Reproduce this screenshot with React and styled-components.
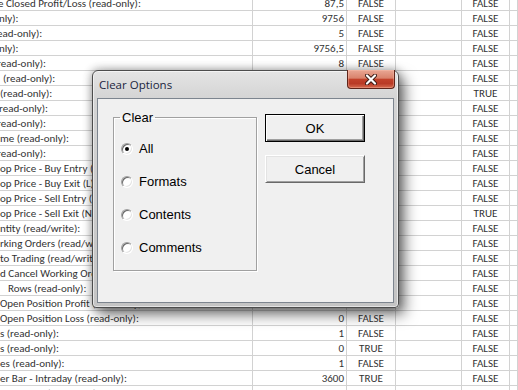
import React from 'react';
import styled, { createGlobalStyle } from 'styled-components';

const GlobalStyle = createGlobalStyle`
  html, body { margin: 0; padding: 0; background: #fff; overflow: hidden; }
`;

const rows = [
  { a: 'e Closed Profit/Loss (read-only):', ind: -2, b: '87,5', c: 'FALSE', e: 'FALSE' },
  { a: 'nly):', ind: -1, b: '9756', c: 'FALSE', e: 'FALSE' },
  { a: 'ead-only):', ind: -3, b: '5', c: 'FALSE', e: 'FALSE' },
  { a: 'nly):', ind: -1, b: '9756,5', c: 'FALSE', e: 'FALSE' },
  { a: 'read-only):', ind: -3, b: '8', c: 'FALSE', e: 'FALSE' },
  { a: '(read-only):', ind: 3, e: 'FALSE' },
  { a: '(read-only):', ind: 0, e: 'TRUE' },
  { a: 'read-only):', ind: -1, e: 'FALSE' },
  { a: 'read-only):', ind: -3, e: 'FALSE' },
  { a: 'me (read-only):', ind: 0, e: 'FALSE' },
  { a: 'read-only):', ind: -3, e: 'FALSE' },
  { a: 'op Price - Buy Entry (B) (read/write):', ind: 0, e: 'FALSE' },
  { a: 'op Price - Buy Exit (L) (read/write):', ind: 0, e: 'FALSE' },
  { a: 'op Price - Sell Entry (S) (read/write):', ind: 0, e: 'FALSE' },
  { a: 'op Price - Sell Exit (N) (read/write):', ind: 0, e: 'TRUE' },
  { a: 'ntity (read/write):', ind: 0, e: 'FALSE' },
  { a: 'rking Orders (read/write):', ind: 0, e: 'FALSE' },
  { a: 'to Trading (read/write):', ind: 0, e: 'FALSE' },
  { a: 'd Cancel Working Orders (read/write):', ind: 0, e: 'FALSE' },
  { a: 'Rows (read-only):', ind: 8, e: 'FALSE' },
  { a: 'Open Position Profit (read-only):', ind: 0, e: 'FALSE' },
  { a: 'Open Position Loss (read-only):', ind: 0, b: '0', c: 'FALSE', e: 'FALSE' },
  { a: 's (read-only):', ind: 0, b: '1', c: 'FALSE', e: 'FALSE' },
  { a: 's (read-only):', ind: 0, b: '0', c: 'TRUE', e: 'FALSE' },
  { a: 'es (read-only):', ind: 0, b: '1', c: 'FALSE', e: 'FALSE' },
  { a: 'er Bar - Intraday (read-only):', ind: 0, b: '3600', c: 'TRUE', e: 'FALSE' },
  { a: 'es Per Bar (read-only):', ind: 0, b: '5', c: 'FALSE', e: 'FALSE' },
];

const options = ['All', 'Formats', 'Contents', 'Comments'];

const Page = styled.div`
  position: relative;
  width: 518px;
  height: 390px;
  overflow: hidden;
  background: #fff;
`;

const Sheet = styled.div`
  margin-top: -4px;
  display: flex;
  flex-direction: column;
  font-family: Carlito, Calibri, Lato, sans-serif;
  font-size: 11px;
  color: #333;
`;

const Row = styled.div`
  display: grid;
  grid-template-columns: 253px 94px 49px 66px 48px 1fr;
  height: 15px;
  box-sizing: border-box;
  border-bottom: 1px solid #d2d2d2;
`;

const Cell = styled.div`
  box-sizing: border-box;
  border-right: 1px solid #d2d2d2;
  overflow: hidden;
  white-space: pre;
  line-height: 15px;
  text-align: ${(p) => p.$align || 'left'};
  padding-right: ${(p) => (p.$align === 'right' ? 2 : 0)}px;
`;

const Dialog = styled.div`
  position: absolute;
  left: 92px;
  top: 70px;
  width: 307px;
  height: 238px;
  box-sizing: border-box;
  display: flex;
  flex-direction: column;
  padding: 0 4px 4px;
  border: 1px solid #4c4c4c;
  border-radius: 6px 6px 4px 4px;
  background: linear-gradient(to bottom, #e4e4e4, #d4d4d4 28px, #cbcbcb 60%, #c4c4c4);
  box-shadow:
    inset 0 0 0 1px rgba(255, 255, 255, 0.55),
    0 0 8px 1px rgba(0, 0, 0, 0.3),
    6px 7px 14px rgba(0, 0, 0, 0.5);
`;

const TitleBar = styled.div`
  height: 27px;
  display: flex;
  align-items: flex-start;
  justify-content: space-between;
`;

const Title = styled.span`
  margin: 6px 0 0 2px;
  font-family: 'Open Sans', 'Noto Sans', sans-serif;
  font-size: 11.5px;
  line-height: 16px;
  color: #1b2540;
`;

const CloseButton = styled.div`
  width: 48px;
  height: 19px;
  margin: -1px -1px 0 0;
  box-sizing: border-box;
  display: flex;
  align-items: center;
  justify-content: center;
  border: 1px solid #5e2419;
  border-top: none;
  border-radius: 0 0 4px 4px;
  background: linear-gradient(to bottom, #e9a794 0%, #d9826c 45%, #c2412a 52%, #b93a25 75%, #d66b50 100%);
  box-shadow: inset 0 0 0 1px rgba(255, 200, 180, 0.35);
`;

const Client = styled.div`
  flex: 1;
  display: flex;
  align-items: flex-start;
  gap: 8px;
  padding: 11px 0 0 15px;
  background: #f0f0f0;
  border: 1px solid #7d858f;
  font-family: 'Liberation Sans', Arial, sans-serif;
  font-size: 13px;
  color: #000;
`;

const GroupBox = styled.fieldset`
  box-sizing: border-box;
  width: 144px;
  height: 161px;
  margin: 0;
  padding: 7px 0 0 6px;
  border: 1px solid #a0a0a0;
  box-shadow: 1px 1px 0 #fff, inset 1px 1px 0 #fff;
`;

const Legend = styled.legend`
  padding: 0 2px;
  line-height: 15px;
`;

const Option = styled.label`
  height: 33px;
  display: flex;
  align-items: center;
  gap: 6px;
  margin-left: 1px;
`;

const RadioMark = styled.span`
  width: 12px;
  height: 12px;
  box-sizing: border-box;
  border-radius: 50%;
  display: flex;
  align-items: center;
  justify-content: center;
  background: #fff;
  border: 1px solid;
  border-color: #a0a0a0 #fff #fff #a0a0a0;
  box-shadow: inset 1px 1px 0 #696969, inset -1px -1px 0 #e3e3e3;

  &::after {
    content: '';
    display: ${(p) => (p.$checked ? 'block' : 'none')};
    width: 4px;
    height: 4px;
    border-radius: 50%;
    background: #000;
  }
`;

const ButtonColumn = styled.div`
  display: flex;
  flex-direction: column;
  gap: 13px;
  margin-top: 4px;
`;

const Button = styled.button`
  width: 100px;
  height: 28px;
  box-sizing: border-box;
  padding: 0;
  background: #f0f0f0;
  font-family: 'Liberation Sans', Arial, sans-serif;
  font-size: 13px;
  color: #000;
  border: 1px solid;
  border-color: ${(p) => (p.$default ? '#000' : '#fff #696969 #696969 #fff')};
  box-shadow: ${(p) =>
    p.$default
      ? 'inset 1px 1px 0 #fff, inset -1px -1px 0 #696969, inset -2px -2px 0 #a0a0a0'
      : 'inset 1px 1px 0 #e3e3e3, inset -1px -1px 0 #a0a0a0'};
`;

function CloseIcon() {
  return (
    <svg width="12" height="11" viewBox="0 0 12 11">
      <path d="M2 1.5 L10 9.5 M10 1.5 L2 9.5" stroke="#3b1a14" strokeWidth="4" strokeLinecap="round" />
      <path d="M2 1.5 L10 9.5 M10 1.5 L2 9.5" stroke="#fff" strokeWidth="2.2" strokeLinecap="round" />
    </svg>
  );
}

export default function App() {
  return (
    <Page>
      <GlobalStyle />
      <Sheet>
        {rows.map((r, i) => (
          <Row key={i}>
            <Cell style={{ textIndent: r.ind }}>{r.a}</Cell>
            <Cell $align='right'>{r.b}</Cell>
            <Cell $align='center'>{r.c}</Cell>
            <Cell />
            <Cell $align='center'>{r.e}</Cell>
            <Cell />
          </Row>
        ))}
      </Sheet>

      <Dialog>
        <TitleBar>
          <Title>Clear Options</Title>
          <CloseButton>
            <CloseIcon />
          </CloseButton>
        </TitleBar>
        <Client>
          <GroupBox>
            <Legend>Clear</Legend>
            {options.map((o, i) => (
              <Option key={o}>
                <RadioMark $checked={i === 0} />
                {o}
              </Option>
            ))}
          </GroupBox>
          <ButtonColumn>
            <Button $default>OK</Button>
            <Button>Cancel</Button>
          </ButtonColumn>
        </Client>
      </Dialog>
    </Page>
  );
}
